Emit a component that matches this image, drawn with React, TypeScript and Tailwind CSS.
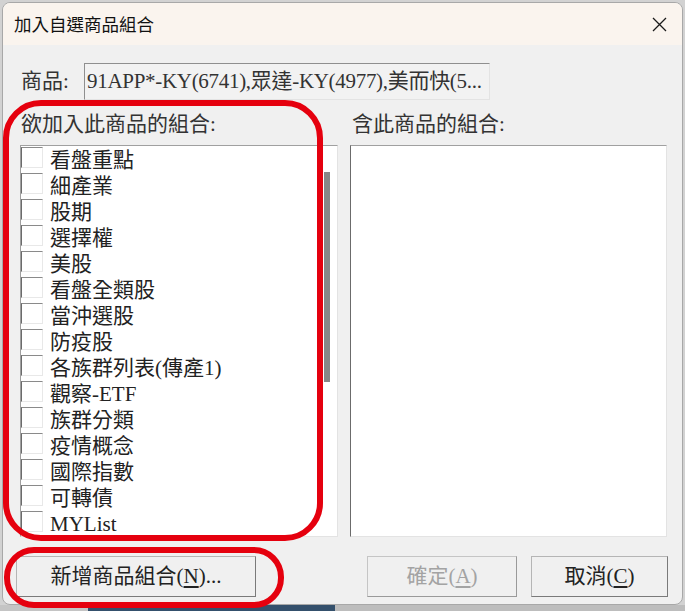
import React from "react";

const items = [
  "看盤重點",
  "細產業",
  "股期",
  "選擇權",
  "美股",
  "看盤全類股",
  "當沖選股",
  "防疫股",
  "各族群列表(傳產1)",
  "觀察-ETF",
  "族群分類",
  "疫情概念",
  "國際指數",
  "可轉債",
  "MYList",
];

export default function App() {
  return (
    <div className="relative w-[685px] h-[611px] overflow-hidden bg-[#d2d2d2] font-['Liberation_Serif','Noto_Sans_CJK_TC',serif] text-[#1e1e1e]">
      <div className="ml-[2px] mt-[2px] w-[681px] h-[603px] rounded-[8px] border border-[#a8a8a8] overflow-hidden flex flex-col bg-[#f0f0f0]">
        {/* title bar */}
        <div className="h-[42px] shrink-0 bg-[#faf4ee] flex items-center justify-between pl-[11px] pr-[15px]">
          <span className="font-['Noto_Sans_CJK_TC',sans-serif] text-[17.5px] leading-none text-[#111]">加入自選商品組合</span>
          <svg width="15" height="15" viewBox="0 0 15 15" className="block">
            <path d="M1 1 L14 14 M14 1 L1 14" stroke="#1a1a1a" strokeWidth="1.3" fill="none" />
          </svg>
        </div>
        {/* body */}
        <div className="flex-1 flex flex-col pl-[17px]">
          <div className="mt-[18px] flex items-center h-[37px]">
            <span className="ml-[1px] w-[63px] text-[21px] leading-none text-[#333]">商品:</span>
            <div className="w-[406px] h-[37px] border border-t-[#8f8f8f] border-l-[#8f8f8f] border-r-[#e3e3e3] border-b-[#e3e3e3] bg-[#f2f2f2] flex items-center pl-[2px] overflow-hidden whitespace-nowrap">
              <span className="text-[21px] leading-none text-[#333] tracking-[-0.3px]">91APP*-KY(6741),眾達-KY(4977),美而快(5...</span>
            </div>
          </div>
          <div className="mt-[11px] flex h-[26px] items-center text-[21px] leading-none text-[#333]">
            <span className="ml-[1px] w-[332px]">欲加入此商品的組合:</span>
            <span className="ml-[-1px]">含此商品的組合:</span>
          </div>
          <div className="mt-[8px] flex gap-[12px]">
            {/* left list */}
            <div className="w-[318px] h-[392px] border border-t-[#a0a0a0] border-l-[#a0a0a0] border-r-[#e3e3e3] border-b-[#e3e3e3] bg-white flex overflow-hidden">
              <div className="flex-1 flex flex-col pt-[1px]">
                {items.map((t) => (
                  <div key={t} className="h-[26px] flex items-start shrink-0">
                    <div className="w-[22px] h-[21px] bg-white border border-t-[#8a8a8a] border-l-[#6b6b6b] border-r-[#e8e8e8] border-b-[#e8e8e8] shrink-0" />
                    <span className="ml-[7px] text-[21px] leading-[26px] text-[#222] whitespace-nowrap">{t}</span>
                  </div>
                ))}
              </div>
              <div className="w-[14px] shrink-0 bg-white">
                <div className="mt-[26px] ml-[1px] w-[6px] h-[210px] bg-[#878787]" />
              </div>
            </div>
            {/* right list */}
            <div className="w-[317px] h-[392px] border border-t-[#a0a0a0] border-l-[#6b6b6b] border-r-[#e3e3e3] border-b-[#e3e3e3] bg-white" />
          </div>
          <div className="mt-[19px] flex items-center">
            <button className="ml-[-4px] w-[240px] h-[41px] bg-[#f0f0f0] border border-t-[#b5b5b5] border-l-[#b5b5b5] border-r-[#7a7a7a] border-b-[#7a7a7a] text-[21px] leading-none text-[#222] font-['Liberation_Serif','Noto_Sans_CJK_TC',serif]">
              新增商品組合(<span className="underline underline-offset-[3px]">N</span>)...
            </button>
            <button className="ml-[111px] w-[150px] h-[41px] bg-[#f0f0f0] border border-t-[#c5c5c5] border-l-[#c5c5c5] border-r-[#9a9a9a] border-b-[#9a9a9a] text-[21px] leading-none text-[#a3a3a3] font-['Liberation_Serif','Noto_Sans_CJK_TC',serif]">
              確定(<span className="underline underline-offset-[3px]">A</span>)
            </button>
            <button className="ml-[14px] w-[137px] h-[41px] bg-[#f0f0f0] border border-t-[#b5b5b5] border-l-[#b5b5b5] border-r-[#7a7a7a] border-b-[#7a7a7a] text-[21px] leading-none text-[#222] font-['Liberation_Serif','Noto_Sans_CJK_TC',serif]">
              取消(<span className="underline underline-offset-[3px]">C</span>)
            </button>
          </div>
        </div>
      </div>
      <div className="flex h-[6px]">
        <div className="w-[88px] bg-[#c4c4c4]" />
        <div className="w-[247px] bg-[#34506c]" />
        <div className="flex-1 bg-[#bdbdbd]" />
      </div>
      {/* red annotations */}
      <div className="absolute left-[3px] top-[100px] w-[320px] h-[441px] border-[6px] border-[#e5000e] rounded-[38px]" />
      <div className="absolute left-[4px] top-[547px] w-[280px] h-[61px] border-[6px] border-[#e5000e] rounded-[30px]" />
    </div>
  );
}
